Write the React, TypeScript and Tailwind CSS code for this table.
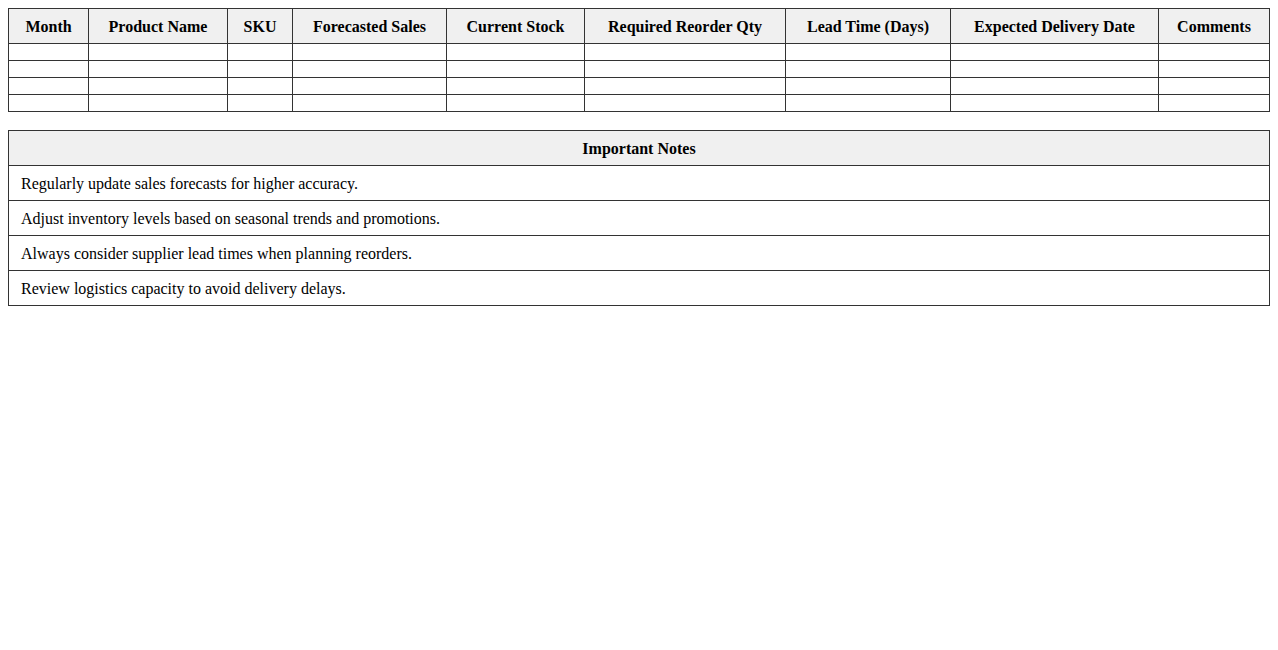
import React from "react";

const headers = [
  "Month",
  "Product Name",
  "SKU",
  "Forecasted Sales",
  "Current Stock",
  "Required Reorder Qty",
  "Lead Time (Days)",
  "Expected Delivery Date",
  "Comments",
];

const colClasses = [
  "w-[80px]",
  "w-[139px]",
  "w-[65px]",
  "w-[154px]",
  "w-[138px]",
  "w-[201px]",
  "w-[165px]",
  "w-[208px]",
  "w-[111px]",
];

const notes = [
  "Regularly update sales forecasts for higher accuracy.",
  "Adjust inventory levels based on seasonal trends and promotions.",
  "Always consider supplier lead times when planning reorders.",
  "Review logistics capacity to avoid delivery delays.",
];

export default function App() {
  return (
    <div className="p-2 font-['Liberation_Serif',serif] text-base text-black bg-white min-h-[650px]">
      <table className="w-full border-collapse table-fixed">
        <colgroup>
          {colClasses.map((c, i) => (
            <col key={i} className={c} />
          ))}
        </colgroup>
        <thead>
          <tr>
            {headers.map((h) => (
              <th
                key={h}
                className="border border-[#333] bg-[#f0f0f0] px-2 pt-[9px] pb-[7px] font-bold text-center leading-[18px] whitespace-nowrap"
              >
                {h}
              </th>
            ))}
          </tr>
        </thead>
        <tbody>
          {[0, 1, 2, 3].map((r) => (
            <tr key={r}>
              {headers.map((h) => (
                <td key={h} className="border border-[#333] p-2 leading-[0px]"></td>
              ))}
            </tr>
          ))}
        </tbody>
      </table>

      <table className="w-full border-collapse mt-[18px]">
        <thead>
          <tr>
            <th className="border border-[#333] bg-[#f0f0f0] px-3 pt-[9px] pb-[7px] font-bold text-center leading-[18px]">
              Important Notes
            </th>
          </tr>
        </thead>
        <tbody>
          {notes.map((n) => (
            <tr key={n}>
              <td className="border border-[#333] px-3 pt-[9px] pb-[7px] text-left leading-[18px]">{n}</td>
            </tr>
          ))}
        </tbody>
      </table>
    </div>
  );
}
